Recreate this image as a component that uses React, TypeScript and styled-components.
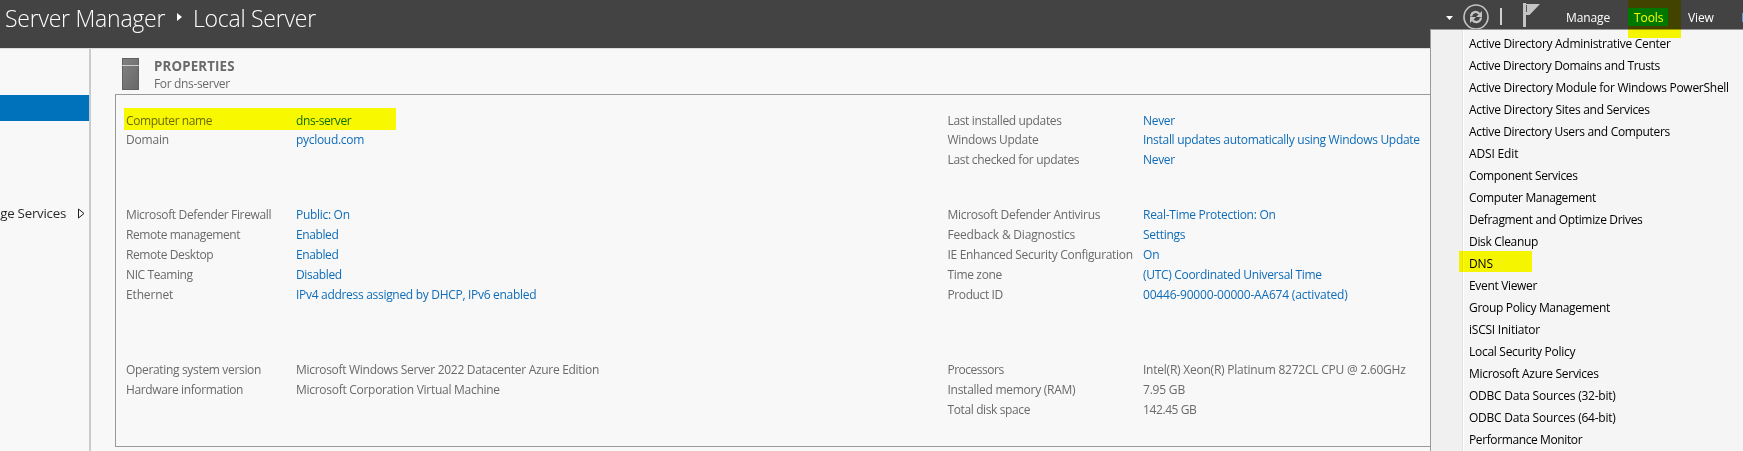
import React from "react";
import styled, { createGlobalStyle } from "styled-components";

const Global = createGlobalStyle`
  *{box-sizing:border-box}
  html,body{margin:0;overflow:hidden;background:#f8f8f8}
  body{font-family:"Open Sans","Noto Sans",sans-serif;font-size:12px;color:#6a6a6a}
`;
const Page = styled.div`position:relative;width:1743px;height:451px;display:flex;flex-direction:column;overflow:hidden;isolation:isolate;background:#f8f8f8`;
const Header = styled.header`height:48px;flex:none;background:#434343;color:#fff;display:flex;justify-content:space-between;padding-left:5px`;
const Crumbs = styled.h1`margin:0;display:flex;font-size:23px;font-weight:300;line-height:37px;white-space:nowrap`;
const Crumb = styled.span<{ $w: number }>`width:${p => p.$w}px;letter-spacing:-.25px`;
const CrumbArrow = styled.svg`width:28px;height:37px;flex:none`;
const Bar = styled.nav`display:flex;width:299px;height:32px;align-items:flex-start;white-space:nowrap`;
const BarIcons = styled.svg`width:104px;height:32px;flex:none;margin-right:12px`;
const BarItem = styled.span<{ $w: number; $active?: boolean }>`
  width:${p => p.$w}px;height:18px;margin-top:8px;padding-left:6px;line-height:20px;letter-spacing:-0.1px;flex:none;
  background:${p => (p.$active ? "#0078d7" : "transparent")};
`;
const BarEdge = styled.span`width:1px;height:9px;margin-top:13px;background:#4aa3e0;flex:none`;
const Body = styled.div`display:flex;flex:1;border-top:1px solid #dcdcdc`;
const Side = styled.aside`width:91px;flex:none;border-right:2px solid #cbcbcb;display:flex;flex-direction:column;overflow:hidden`;
const Selected = styled.div`height:26px;margin-top:46px;background:#0072bc;flex:none`;
const SideItem = styled.div`margin-top:82px;height:20px;display:flex;justify-content:flex-end;align-items:center;padding-right:4px;color:#2b2b2b;font-size:13.3px;letter-spacing:-.25px;line-height:20px;white-space:nowrap`;
const SideArrow = styled.svg`width:7px;height:11px;margin-left:12px;flex:none`;
const Main = styled.main`flex:1;padding-left:24px;display:flex;flex-direction:column`;
const PanelHead = styled.div`height:45px;display:flex;padding:9px 0 0 7px;flex:none`;
const PanelText = styled.div`margin-top:-1px`;
const ServerIcon = styled.svg`width:17px;height:32px;margin-right:15px`;
const PanelTitle = styled.div`font-size:13.3px;font-weight:700;line-height:18px;letter-spacing:.15px`;
const PanelSub = styled.div`line-height:18px;letter-spacing:-.35px`;
const Panel = styled.section`height:353px;border:1px solid #999;border-right:0;display:flex;padding:16px 0 0 10px`;
const Column = styled.div<{ $w: number; $label: number }>`width:${p => p.$w}px;flex:none;--label:${p => p.$label}px`;
const Group = styled.div<{ $h: number }>`height:${p => p.$h}px`;
const Row = styled.div<{ $h?: number }>`height:${p => p.$h ?? 20}px;line-height:20px;display:flex;white-space:nowrap`;
const Label = styled.span<{ $ls?: number }>`width:var(--label);flex:none;letter-spacing:${p => p.$ls ?? -0.1}px`;
const Value = styled.span<{ $link?: boolean; $ls?: number }>`color:${p => (p.$link ? "#0f6cb8" : "inherit")};letter-spacing:${p => p.$ls ?? -0.1}px`;
const Menu = styled.div`position:absolute;left:1430px;top:29px;width:320px;height:430px;border:1px solid #999;background:#f5f5f5;display:flex`;
const Gutter = styled.div`width:32px;background:#f0f0f0;border-right:1px solid #e2e2e2;box-shadow:1px 0 #fff;flex:none`;
const Items = styled.ul`list-style:none;margin:0;padding:3px 0 0 6px;color:#000;white-space:nowrap`;
const Item = styled.li<{ $ls?: number }>`height:22px;line-height:22px;letter-spacing:${p => p.$ls ?? -0.1}px`;
const Marker = styled.div<{ $x: number; $y: number; $w: number; $h: number }>`
  position:absolute;left:${p => p.$x}px;top:${p => p.$y}px;width:${p => p.$w}px;height:${p => p.$h}px;
  background:#ff0;mix-blend-mode:multiply;
`;

type Entry = [string, string, number?, number?];
const left: { h: number; link: boolean; rows: Entry[] }[] = [
  { h: 94, link: true, rows: [["Computer name", "dns-server", -0.42, -0.4], ["Domain", "pycloud.com", -0.2, -0.3]] },
  { h: 155, link: true, rows: [["Microsoft Defender Firewall", "Public: On", -0.35, -0.3], ["Remote management", "Enabled", -0.42, -0.4], ["Remote Desktop", "Enabled", -0.4, -0.4], ["NIC Teaming", "Disabled", -0.4, -0.35], ["Ethernet", "IPv4 address assigned by DHCP, IPv6 enabled", -0.15, -0.3]] },
  { h: 60, link: false, rows: [["Operating system version", "Microsoft Windows Server 2022 Datacenter Azure Edition", -0.33, -0.3], ["Hardware information", "Microsoft Corporation Virtual Machine", -0.38, -0.28]] },
];
const right: typeof left = [
  { h: 94, link: true, rows: [["Last installed updates", "Never", -0.35, -0.3], ["Windows Update", "Install updates automatically using Windows Update", -0.32, -0.3], ["Last checked for updates", "Never", -0.34, -0.3]] },
  { h: 155, link: true, rows: [["Microsoft Defender Antivirus", "Real-Time Protection: On", -0.3, -0.28], ["Feedback & Diagnostics", "Settings", -0.2, -0.3], ["IE Enhanced Security Configuration", "On", -0.31, -0.1], ["Time zone", "(UTC) Coordinated Universal Time", -0.35, -0.31], ["Product ID", "00446-90000-00000-AA674 (activated)", -0.4, -0.19]] },
  { h: 60, link: false, rows: [["Processors", "Intel(R) Xeon(R) Platinum 8272CL CPU @ 2.60GHz", -0.5, -0.23], ["Installed memory (RAM)", "7.95 GB", -0.27, -0.2], ["Total disk space", "142.45 GB", -0.38, -0.4]] },
];
const tools: [string, number?][] = [
  ["Active Directory Administrative Center", -0.3], ["Active Directory Domains and Trusts", -0.35], ["Active Directory Module for Windows PowerShell", -0.27],
  ["Active Directory Sites and Services", -0.28], ["Active Directory Users and Computers", -0.33], ["ADSI Edit", -0.15], ["Component Services", -0.34], ["Computer Management", -0.36],
  ["Defragment and Optimize Drives", -0.33], ["Disk Cleanup", -0.33], ["DNS"], ["Event Viewer", -0.33], ["Group Policy Management", -0.32], ["iSCSI Initiator", -0.23],
  ["Local Security Policy", -0.28], ["Microsoft Azure Services", -0.3], ["ODBC Data Sources (32-bit)", -0.23], ["ODBC Data Sources (64-bit)", -0.23], ["Performance Monitor", -0.39],
];

const Props = ({ data, w, label }: { data: typeof left; w: number; label: number }) => (
  <Column $w={w} $label={label}>
    {data.map((g, gi) => (
      <Group key={gi} $h={g.h}>
        {g.rows.map(([l, v, a, b], i) => (
          <Row key={l} $h={gi === 0 && i === 0 ? 19 : 20}><Label $ls={a}>{l}</Label><Value $link={g.link} $ls={b}>{v}</Value></Row>
        ))}
      </Group>
    ))}
  </Column>
);

export default function App() {
  return (
    <Page>
      <Global />
      <Header>
        <Crumbs>
          <Crumb $w={160}>Server Manager</Crumb>
          <CrumbArrow viewBox="0 0 28 37"><path d="M12 13l5 4-5 4z" fill="#fff" /></CrumbArrow>
          <Crumb $w={130}>Local Server</Crumb>
        </Crumbs>
        <Bar>
          <BarIcons viewBox="1444 0 104 32">
            <path d="M1446 16h7l-3.500 4z" fill="#fff" />
            <circle cx="1476" cy="17" r="12" fill="none" stroke="#c4c4c4" strokeWidth="1.600" />
            <g fill="none" stroke="#c4c4c4" strokeWidth="2.200">
              <path d="M1471 16.500c.5-5 6-6 8.500-2.500M1481 17.500c-.5 5-6 6-8.500 2.500" />
            </g>
            <path d="M1482 11v6h-6zM1470 23v-6h6z" fill="#c4c4c4" />
            <path d="M1501 8v17" stroke="#d0d0d0" strokeWidth="2" />
            <path d="M1523 3h3v24h-3z" fill="#c4c4c4" />
            <path d="M1526 4h14l-10.500 11h-3.500z" fill="#c4c4c4" />
            <path d="M1526.500 5v7" stroke="#555" />
          </BarIcons>
          <BarItem $w={68}>Manage</BarItem>
          <BarItem $w={40} $active>Tools</BarItem>
          <BarItem $w={14} />
          <BarItem $w={60}>View</BarItem>
          <BarEdge />
        </Bar>
      </Header>
      <Body>
        <Side>
          <Selected />
          <SideItem>File and Storage Services<SideArrow viewBox="0 0 7 11"><path d="M.5 1v9l5.500-4.500z" fill="none" stroke="#222" /></SideArrow></SideItem>
        </Side>
        <Main>
          <PanelHead>
            <ServerIcon viewBox="0 0 17 32">
              <defs><linearGradient id="metal" x2="1" y2="1"><stop stopColor="#828282" /><stop offset="1" stopColor="#686868" /></linearGradient></defs>
              <rect x=".5" y=".5" width="16" height="31" fill="url(#metal)" stroke="#606060" /><path d="M0 7.500h17" stroke="#ccc" />
            </ServerIcon>
            <PanelText><PanelTitle>PROPERTIES</PanelTitle><PanelSub>For dns-server</PanelSub></PanelText>
          </PanelHead>
          <Panel>
            <Props data={left} w={821.500} label={170} />
            <Props data={right} w={500} label={195.500} />
          </Panel>
        </Main>
      </Body>
      <Menu><Gutter /><Items>{tools.map(([t, ls]) => <Item key={t} $ls={ls}>{t}</Item>)}</Items></Menu>
      <Marker $x={124} $y={108} $w={272} $h={22} />
      <Marker $x={1628} $y={0} $w={53} $h={38} />
      <Marker $x={1459} $y={251} $w={73} $h={21} />
    </Page>
  );
}
